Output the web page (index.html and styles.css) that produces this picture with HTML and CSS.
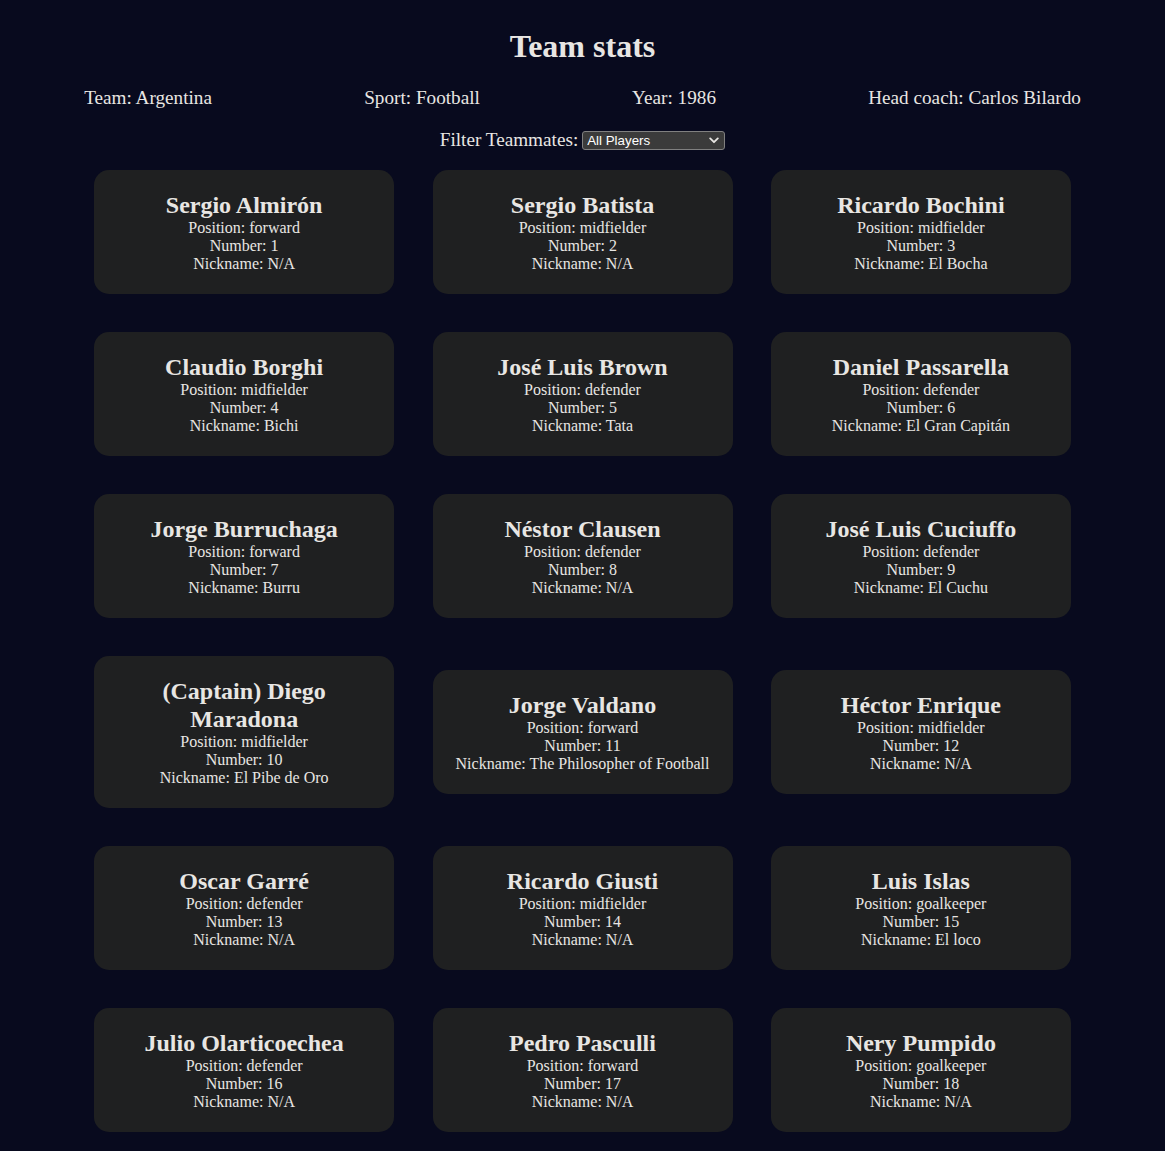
FILE: index.html
```html
<!DOCTYPE html>
<html lang="en">
<head>
<meta charset="UTF-8">
<title>Team stats</title>
<link rel="stylesheet" href="styles.css">
</head>
<body>
<header class="title-container">
  <h1 class="title">Team stats</h1>
  <div class="team-stats">
    <p>Team: <span>Argentina</span></p>
    <p>Sport: <span>Football</span></p>
    <p>Year: <span>1986</span></p>
    <p>Head coach: <span>Carlos Bilardo</span></p>
  </div>
</header>
<main>
  <div class="filter-row">
    <label class="options-label" for="players">Filter Teammates:</label>
    <span class="select-wrap">
      <select id="players" class="select">
        <option value="all">All Players</option>
        <option value="forward">Forwards</option>
        <option value="midfielder">Midfielders</option>
        <option value="defender">Defenders</option>
        <option value="goalkeeper">Goalkeepers</option>
      </select>
      <svg class="chevron" width="10" height="7" viewBox="0 0 10 7"><path d="M1.2 1.4 L5 5.2 L8.8 1.4" fill="none" stroke="#e8e6e3" stroke-width="1.8" stroke-linecap="round" stroke-linejoin="round"/></svg>
    </span>
  </div>
  <div class="players">
    <div class="player-card"><h2>Sergio Almirón</h2><p>Position: forward</p><p>Number: 1</p><p>Nickname: N/A</p></div>
    <div class="player-card"><h2>Sergio Batista</h2><p>Position: midfielder</p><p>Number: 2</p><p>Nickname: N/A</p></div>
    <div class="player-card"><h2>Ricardo Bochini</h2><p>Position: midfielder</p><p>Number: 3</p><p>Nickname: El Bocha</p></div>
    <div class="player-card"><h2>Claudio Borghi</h2><p>Position: midfielder</p><p>Number: 4</p><p>Nickname: Bichi</p></div>
    <div class="player-card"><h2>José Luis Brown</h2><p>Position: defender</p><p>Number: 5</p><p>Nickname: Tata</p></div>
    <div class="player-card"><h2>Daniel Passarella</h2><p>Position: defender</p><p>Number: 6</p><p>Nickname: El Gran Capitán</p></div>
    <div class="player-card"><h2>Jorge Burruchaga</h2><p>Position: forward</p><p>Number: 7</p><p>Nickname: Burru</p></div>
    <div class="player-card"><h2>Néstor Clausen</h2><p>Position: defender</p><p>Number: 8</p><p>Nickname: N/A</p></div>
    <div class="player-card"><h2>José Luis Cuciuffo</h2><p>Position: defender</p><p>Number: 9</p><p>Nickname: El Cuchu</p></div>
    <div class="player-card"><h2>(Captain) Diego Maradona</h2><p>Position: midfielder</p><p>Number: 10</p><p>Nickname: El Pibe de Oro</p></div>
    <div class="player-card"><h2>Jorge Valdano</h2><p>Position: forward</p><p>Number: 11</p><p>Nickname: The Philosopher of Football</p></div>
    <div class="player-card"><h2>Héctor Enrique</h2><p>Position: midfielder</p><p>Number: 12</p><p>Nickname: N/A</p></div>
    <div class="player-card"><h2>Oscar Garré</h2><p>Position: defender</p><p>Number: 13</p><p>Nickname: N/A</p></div>
    <div class="player-card"><h2>Ricardo Giusti</h2><p>Position: midfielder</p><p>Number: 14</p><p>Nickname: N/A</p></div>
    <div class="player-card"><h2>Luis Islas</h2><p>Position: goalkeeper</p><p>Number: 15</p><p>Nickname: El loco</p></div>
    <div class="player-card"><h2>Julio Olarticoechea</h2><p>Position: defender</p><p>Number: 16</p><p>Nickname: N/A</p></div>
    <div class="player-card"><h2>Pedro Pasculli</h2><p>Position: forward</p><p>Number: 17</p><p>Nickname: N/A</p></div>
    <div class="player-card"><h2>Nery Pumpido</h2><p>Position: goalkeeper</p><p>Number: 18</p><p>Nickname: N/A</p></div>
    <div class="player-card"><h2>Oscar Ruggeri</h2><p>Position: defender</p><p>Number: 19</p><p>Nickname: El Cabezón</p></div>
    <div class="player-card"><h2>Carlos Tapia</h2><p>Position: midfielder</p><p>Number: 20</p><p>Nickname: N/A</p></div>
    <div class="player-card"><h2>Marcelo Trobbiani</h2><p>Position: midfielder</p><p>Number: 21</p><p>Nickname: Calesita</p></div>
    <div class="player-card"><h2>Héctor Zelada</h2><p>Position: goalkeeper</p><p>Number: 22</p><p>Nickname: N/A</p></div>
  </div>
</main>
</body>
</html>
```
FILE: styles.css
```css
*,
*::before,
*::after {
  box-sizing: border-box;
}

html {
  background-color: #080a1e;
}

body {
  margin: 8px;
  padding: 0;
  background-color: #080a1e;
  color: #e8e6e3;
  font-family: "Liberation Serif", "Times New Roman", serif;
  text-align: center;
}

.title {
  margin: 0;
  padding-top: 20px;
  font-size: 32px;
  font-weight: bold;
  line-height: 37px;
}

.team-stats {
  display: flex;
  justify-content: space-around;
  margin-top: 22px;
  font-size: 19.2px;
  line-height: 22px;
}

.team-stats p {
  margin: 0;
}

.filter-row {
  margin-top: 20px;
  line-height: 21px;
}

.options-label {
  font-size: 19.2px;
}

.select-wrap {
  position: relative;
  display: inline-block;
  vertical-align: 1px;
}

.select {
  appearance: none;
  -webkit-appearance: none;
  display: block;
  width: 143px;
  height: 19px;
  margin: 0;
  padding: 0 18px 0 4px;
  border: 1px solid #808080;
  border-radius: 3px;
  background-color: #3b3b3b;
  color: #ffffff;
  font-family: "Liberation Sans", Arial, sans-serif;
  font-size: 13.33px;
  line-height: 17px;
  text-align: left;
}

.chevron {
  position: absolute;
  right: 6px;
  top: 6px;
  pointer-events: none;
}

.players {
  display: flex;
  flex-wrap: wrap;
  justify-content: center;
  align-items: center;
  margin: 0;
}

.player-card {
  width: 300px;
  margin: 19.2px;
  padding: 20.8px;
  border-radius: 15px;
  background-color: #1f2021;
}

.player-card h2 {
  margin: 0;
  font-size: 24px;
  font-weight: bold;
  line-height: 28px;
}

.player-card p {
  margin: 0;
  font-size: 16px;
  line-height: 18px;
}
```
